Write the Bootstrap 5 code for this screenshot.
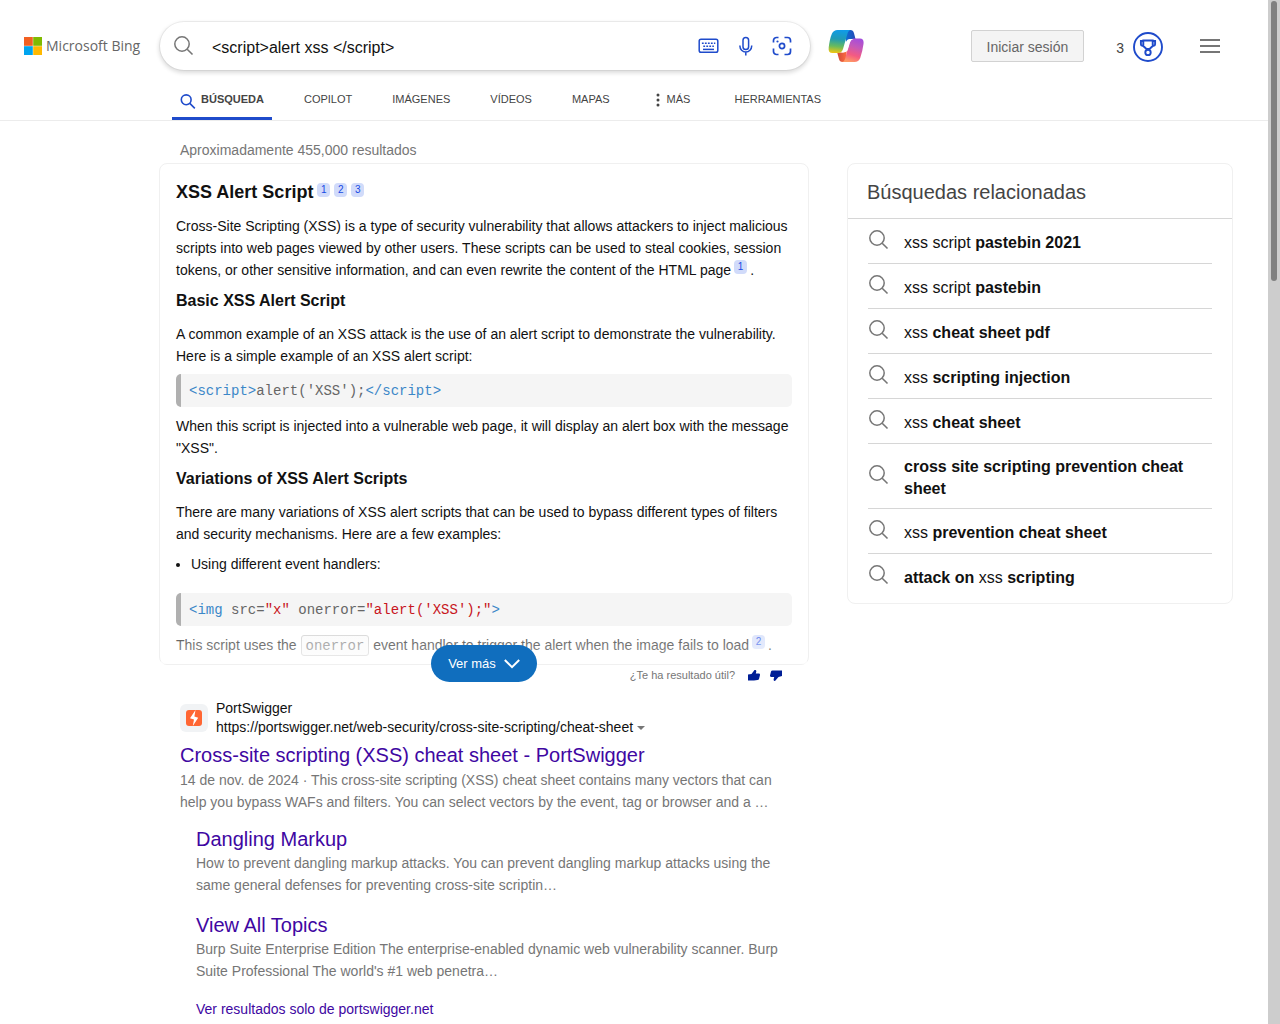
<!DOCTYPE html>
<html lang="es">
<head>
<meta charset="utf-8">
<meta name="viewport" content="width=device-width, initial-scale=1">
<title>&lt;script&gt;alert xss &lt;/script&gt; - Buscar</title>
<link href="https://cdn.jsdelivr.net/npm/bootstrap@5.3.0/dist/css/bootstrap.min.css" rel="stylesheet">
<style>
body{font:14px/22px "Liberation Sans",Arial,sans-serif;color:#111;background:#fff;overflow:hidden}
a{text-decoration:none}
svg{display:block;flex:none}
.page-shell{height:100vh;overflow:hidden}
.scroll-track{flex:0 0 12px;background:#cdcdcd}
.scroll-thumb{width:6px;height:280px;margin:1px auto 0 3px;border-radius:3px;background:#808080}
.site-head{border-bottom:1px solid #ececec}
.head-row{padding:22px 48px 0 24px}
.brand-link{flex:0 0 136px;height:48px}
.brand-name{font:500 14px/20px "Open Sans","Noto Sans",sans-serif;color:#666;white-space:nowrap}
.search-box{flex:0 1 650px;height:48px;padding:0 17px 0 13px;border-radius:24px;box-shadow:0 0 0 1px #0000000d,0 2px 4px 1px #00000024;min-width:0}
.search-input{font-size:16px;color:#111;border:0;outline:0;background:none;min-width:0;margin-left:15px;padding:3px 2px 0}
.icon-btn{border:0;background:none;padding:0}
.lens-grey{color:#767676}
.copilot-link{margin-left:18px}
.menu-btn{margin-left:36px}
.signin-btn{height:32px;padding:2px 15px 0;border:1px solid #d2d2d2;border-radius:2px;background:#f4f4f4;color:#666;white-space:nowrap}
.points{color:#444;margin-left:32px;padding-top:3px}
.tab-row{padding:8px 0 0 172px;height:50px}
.tab-link{font-size:11px;line-height:18px;color:#444;padding:12px 8px 0;margin-right:24px;height:42px;white-space:nowrap}
.tab-link.current{font-weight:700;border-bottom:3px solid #1f4bcb;gap:5px}
.tab-more{margin-right:28px}
.layout{padding:18px 35px 0 159px;gap:38px}
.results-col{flex:0 1 650px;min-width:0}
.side-col{flex:0 1 386px;min-width:0;padding-top:24px}
.count-line{padding-left:21px;color:#767676;margin-bottom:2px}
.answer-card{position:relative;border:1px solid #f0f0f0;border-radius:8px;padding:16px 16px 8px}
.answer-card p{margin:0}
.answer-card h2{font-size:18px;line-height:24px;font-weight:700;margin:0 0 11px}
.answer-card h3{font-size:16px;line-height:20px;font-weight:700;margin:10px 0 12px}
.cite{display:inline-block;font-size:10px;line-height:14px;width:13px;height:14px;text-align:center;border-radius:4px;background:#d1dbfa;color:#174ae4;font-weight:400;vertical-align:5px;margin-left:4px}
p .cite{margin:-6px 3px 0}
.snippet-code{font:14px/18px "Liberation Mono",monospace;color:#666;background:#f5f5f5;border-left:5px solid #b0b0b0;border-radius:5px;padding:8px 8px 7px;margin:7px 0 8px;overflow:hidden}
.tok-tag{color:#3b87c8}.tok-str{color:#c8161d}
.bullets{margin:8px 0 18px;padding-left:15px}
.inline-code{font:14px/20px "Liberation Mono",monospace;color:#777;border:1px solid #ccc;border-radius:3px;background:#fafafa;padding:2px 4px 1px}
.fade-out{position:absolute;left:1px;right:1px;bottom:0;height:38px;background:linear-gradient(#ffffff33,#ffffffa0)}
.more-btn{position:absolute;left:271px;bottom:-18px;height:37px;width:106px;border:0;border-radius:19px;background:#106ebe;color:#fff;font-size:13px}
.feedback{font-size:11px;line-height:20px;color:#767676;padding-right:27px;gap:10px;margin-bottom:2px}
.feedback span{margin-right:3px}
.site-icon{width:28px;height:28px;border-radius:6px;background:#f1f3f5}
.result-block{padding:12px 21px 0}
.site-line{line-height:19px;color:#111}
.result-title{font-size:20px;line-height:28px;font-weight:400;margin:0}
.result-block a.visited{color:#4007a2}
.result-text{color:#767676;margin:0}
.sub-results{padding-left:16px}
.sub-item{margin-top:13px}
.sub-item .result-title{line-height:26px}
.sub-item + .sub-item{margin-top:16px}
.related-card{border:1px solid #f0f0f0;border-radius:8px;padding-bottom:4px}
.related-card h2{font-size:20px;line-height:24px;color:#444;margin:0;padding:16px 19px 14px;border-bottom:1px solid #d6d6d6;font-weight:400}
.related-list{margin:0 20px;padding:0}
.related-list a{display:flex;align-items:center;gap:14px;min-height:45px;padding:12px 0 8px;font-size:16px;line-height:22px;color:#111;border-bottom:1px solid #d6d6d6}
.related-list li:last-child a{border-bottom-color:transparent}
.related-list svg{margin:-3px 0 3px;color:#767676}
</style>
<script src="https://cdn.jsdelivr.net/npm/bootstrap@5.3.0/dist/js/bootstrap.bundle.min.js"></script>
</head>
<body>
<svg width="0" height="0" class="position-absolute" aria-hidden="true">
<symbol id="lens" viewBox="0 0 22 22"><circle cx="9" cy="9" r="7.200" fill="none" stroke="currentColor" stroke-width="1.500"/><path d="M14.200 14.200 19.500 19.500" stroke="currentColor" stroke-width="1.600" fill="none"/></symbol>
</svg>
<div class="page-shell d-flex">
<div class="flex-grow-1 overflow-hidden">
<header class="site-head">
  <div class="head-row d-flex align-items-center">
    <a href="#" class="brand-link d-flex align-items-center">
      <svg width="18" height="18" viewBox="0 0 18 18"><path fill="#f26022" d="M0 0h9v9H0z"/><path fill="#7fba00" d="M9 0h9v9H9z"/><path fill="#00a4ef" d="M0 9h9v9H0z"/><path fill="#ffb900" d="M9 9h9v9H9z"/><path stroke="#fff" stroke-opacity=".4" d="M9 0v18M0 9h18"/></svg>
      <span class="brand-name ms-1">Microsoft Bing</span>
    </a>
    <form class="search-box d-flex align-items-center" onsubmit="return false">
      <button class="icon-btn lens-grey" type="submit" aria-label="Buscar"><svg width="22" height="22"><use href="#lens"/></svg></button>
      <input class="search-input flex-grow-1" type="text" aria-label="Consulta" value="&lt;script&gt;alert xss &lt;/script&gt;">
      <div class="d-flex align-items-center">
        <button class="icon-btn" type="button" aria-label="Teclado"><svg width="22" height="22" viewBox="0 0 22 22" fill="none" stroke="#1f4bcb" stroke-width="1.500"><rect x="2.200" y="4.200" width="18.600" height="13" rx="1.800"/><path stroke-dasharray="1.800 1.200" d="M4.900 8.200h13.400M6.300 11.200h10.600"/><path d="M6 14.400h11"/></svg></button>
        <button class="icon-btn ms-3" type="button" aria-label="Voz"><svg width="20" height="22" viewBox="0 0 20 22" fill="none" stroke="#1f4bcb" stroke-width="1.500"><rect x="8" y="2.500" width="5.600" height="12" rx="2.800"/><path d="M4.900 10.500v.6a5.900 5.900 0 0 0 11.800 0v-.6M10.800 17v3.500"/></svg></button>
        <button class="icon-btn ms-3" type="button" aria-label="Imagen"><svg width="22" height="22" viewBox="0 0 22 22" fill="none" stroke="#1f4bcb" stroke-width="1.700"><path d="M2.500 7.500v-2a3 3 0 0 1 3-3h2M13.500 2.500h3a3 3 0 0 1 3 3v2M19.500 13.500v3a3 3 0 0 1-3 3h-3M7.500 19.500h-2a3 3 0 0 1-3-3v-3"/><circle cx="11" cy="11" r="2.600"/><circle cx="6.500" cy="6.500" r="1.100" fill="#1f4bcb" stroke="none"/></svg></button>
      </div>
    </form>
    <a href="#" aria-label="Copilot" class="copilot-link"><svg width="36" height="36" viewBox="0 0 36 36">
      <defs>
      <linearGradient id="ga" x1=".5" y1="0" x2=".4" y2="1"><stop offset="0" stop-color="#109be8"/><stop offset=".4" stop-color="#209bb4"/><stop offset=".72" stop-color="#69bb5d"/><stop offset="1" stop-color="#edc514"/></linearGradient>
      <linearGradient id="gb" x1=".7" y1="0" x2=".4" y2="1"><stop offset="0" stop-color="#a54ddb"/><stop offset=".35" stop-color="#c559b8"/><stop offset=".7" stop-color="#f45a82"/><stop offset="1" stop-color="#ff9a65"/></linearGradient>
      <linearGradient id="gc"><stop offset="0" stop-color="#0b71d8"/><stop offset="1" stop-color="#2549b4"/></linearGradient>
      <linearGradient id="gd"><stop offset="0" stop-color="#cf4b3a"/><stop offset="1" stop-color="#ff6c40"/></linearGradient></defs>
      <path fill="url(#gc)" d="M17 2h5.500q2.600 0 3.500 3.200l1.500 5.800H22q-3 0-4 3z"/>
      <path fill="url(#gd)" d="M18 34h-3.500q-2.800 0-3.600-3.200L9.200 24.500H14q3.500 0 4.800-3z"/>
      <path fill="url(#ga)" d="M9.500 2H23q-2.500 0-3.500 3.500L15 21q-1.200 4-5 4H4.500Q0 25 .7 19.500C1.200 15 2.300 9 4 5.500Q5.700 2 9.500 2z"/>
      <path fill="url(#gb)" d="M26 10.500h6q4.200 0 3.500 5.500-.8 6.500-3.300 14Q30.700 34 26.500 34H13.500q2.600 0 3.700-3.500L21.500 14.500q1-4 4.500-4z"/>
      <path fill="#fff" d="M23 11Q19 11.500 18 15l-2 6.500q-1 2.500-3 3h2q4 0 5-3.500l2-6.500q.8-3 3.500-3.500z"/>
    </svg></a>
    <button class="signin-btn ms-auto" type="button">Iniciar sesión</button>
    <span class="points">3</span>
    <a href="#" aria-label="Rewards" class="ms-2"><svg width="32" height="32" viewBox="0 0 32 32" fill="none" stroke="#1f4bcb" stroke-width="1.900"><circle cx="16" cy="17" r="14"/><path d="M11.300 10.500h9.400v5.500l-3.200 3h-3l-3.200-3zM11.300 11H8.900v3.300q0 1.400 1.400 1.400h1M20.700 11h2.400v3.300q0 1.400-1.400 1.400h-1"/><circle cx="16" cy="22.400" r="2.700"/></svg></a>
    <button class="icon-btn menu-btn" type="button" aria-label="Menú"><svg width="20" height="20" viewBox="0 0 20 20" stroke="#767676" stroke-width="2"><path d="M0 4h20M0 10h20M0 16h20"/></svg></button>
  </div>
  <nav class="tab-row d-flex">
    <a class="tab-link current d-flex" href="#"><svg width="16" height="16" viewBox="0 0 16 16" fill="none" stroke="#1f4bcb" stroke-width="1.600" class="mt-1"><circle cx="6.200" cy="5.800" r="4.900"/><path d="m9.800 9.400 5 5"/></svg><span>BÚSQUEDA</span></a>
    <a class="tab-link" href="#">COPILOT</a>
    <a class="tab-link" href="#">IMÁGENES</a>
    <a class="tab-link" href="#">VÍDEOS</a>
    <a class="tab-link" href="#">MAPAS</a>
    <a class="tab-link tab-more d-flex" href="#"><svg width="17" height="18" fill="#444"><circle cx="8" cy="5" r="1.500"/><circle cx="8" cy="10" r="1.500"/><circle cx="8" cy="15" r="1.500"/></svg>MÁS</a>
    <a class="tab-link" href="#">HERRAMIENTAS</a>
  </nav>
</header>
<div class="layout d-flex">
  <main class="results-col">
    <div class="count-line">Aproximadamente 455,000 resultados</div>
    <section class="answer-card">
      <h2>XSS Alert Script<a href="#" class="cite">1</a><a href="#" class="cite">2</a><a href="#" class="cite">3</a></h2>
      <p>Cross-Site Scripting (XSS) is a type of security vulnerability that allows attackers to inject malicious scripts into web pages viewed by other users. These scripts can be used to steal cookies, session tokens, or other sensitive information, and can even rewrite the content of the HTML page<a href="#" class="cite">1</a>.</p>
      <h3>Basic XSS Alert Script</h3>
      <p>A common example of an XSS attack is the use of an alert script to demonstrate the vulnerability. Here is a simple example of an XSS alert script:</p>
      <pre class="snippet-code"><span class="tok-tag">&lt;script&gt;</span>alert('XSS');<span class="tok-tag">&lt;/script&gt;</span></pre>
      <p>When this script is injected into a vulnerable web page, it will display an alert box with the message "XSS".</p>
      <h3>Variations of XSS Alert Scripts</h3>
      <p>There are many variations of XSS alert scripts that can be used to bypass different types of filters and security mechanisms. Here are a few examples:</p>
      <ul class="bullets"><li>Using different event handlers:</li></ul>
      <pre class="snippet-code"><span class="tok-tag">&lt;img</span> src=<span class="tok-str">"x"</span> onerror=<span class="tok-str">"alert('XSS');"</span><span class="tok-tag">&gt;</span></pre>
      <p>This script uses the <span class="inline-code">onerror</span> event handler to trigger the alert when the image fails to load<a href="#" class="cite">2</a>.</p>
      <div class="fade-out"></div>
      <button class="more-btn d-flex align-items-center justify-content-center" type="button">Ver más<svg class="ms-2" width="16" height="10" viewBox="0 0 16 10" fill="none" stroke="#fff" stroke-width="2"><path d="m.8 1 7.200 7.200L15.200 1"/></svg></button>
    </section>
    <div class="feedback d-flex justify-content-end align-items-center">
      <span>¿Te ha resultado útil?</span>
      <button class="icon-btn" type="button" aria-label="Sí"><svg width="12" height="12" viewBox="0 0 12 12" fill="#001e96"><path d="M0 5.500 3.500 5 6.500 1Q8.500.5 8.300 2.500L7.800 4.500H11q1.200.3 1 1.500l-1 4q-.3 1-1.500 1L6 11.500H0z"/></svg></button>
      <button class="icon-btn" type="button" aria-label="No"><svg width="12" height="12" viewBox="0 0 12 12" fill="#001e96"><path d="M12 7 8.500 8 5 12Q3.200 12 3.700 10L4.200 8H1Q-.2 7.700 0 6.500l1-4Q1.300 1.500 2.500 1.500L6 1.500H12z"/></svg></button>
    </div>
    <article class="result-block">
      <div class="d-flex align-items-center">
        <div class="site-icon d-flex align-items-center justify-content-center me-2"><svg width="16" height="16" viewBox="0 0 16 16"><rect width="16" height="16" rx="3" fill="#ff6633"/><path fill="#fff" d="M9.500 0 4 8.200l4 1.300L6.800 16 12.200 7.800 8.400 6.500z"/></svg></div>
        <div class="site-line"><div>PortSwigger</div><div class="d-flex align-items-center">https://portswigger.net/web-security/cross-site-scripting/cheat-sheet<svg class="ms-1" width="8" height="4"><path fill="#767676" d="M0 0h8L4 4z"/></svg></div></div>
      </div>
      <h2 class="result-title mt-1"><a class="visited" href="#">Cross-site scripting (XSS) cheat sheet - PortSwigger</a></h2>
      <p class="result-text">14 de nov. de 2024 · This cross-site scripting (XSS) cheat sheet contains many vectors that can help you bypass WAFs and filters. You can select vectors by the event, tag or browser and a …</p>
      <div class="sub-results">
        <div class="sub-item"><h3 class="result-title"><a class="visited" href="#">Dangling Markup</a></h3><p class="result-text">How to prevent dangling markup attacks. You can prevent dangling markup attacks using the same general defenses for preventing cross-site scriptin…</p></div>
        <div class="sub-item"><h3 class="result-title"><a class="visited" href="#">View All Topics</a></h3><p class="result-text">Burp Suite Enterprise Edition The enterprise-enabled dynamic web vulnerability scanner. Burp Suite Professional The world's #1 web penetra…</p></div>
        <div class="mt-3"><a class="visited" href="#">Ver resultados solo de portswigger.net</a></div>
      </div>
    </article>
  </main>
  <aside class="side-col">
    <section class="related-card">
      <h2>Búsquedas relacionadas</h2>
      <ul class="related-list list-unstyled">
        <li><a href="#"><svg width="22" height="22"><use href="#lens"/></svg><span>xss script <strong>pastebin 2021</strong></span></a></li>
        <li><a href="#"><svg width="22" height="22"><use href="#lens"/></svg><span>xss script <strong>pastebin</strong></span></a></li>
        <li><a href="#"><svg width="22" height="22"><use href="#lens"/></svg><span>xss <strong>cheat sheet pdf</strong></span></a></li>
        <li><a href="#"><svg width="22" height="22"><use href="#lens"/></svg><span>xss <strong>scripting injection</strong></span></a></li>
        <li><a href="#"><svg width="22" height="22"><use href="#lens"/></svg><span>xss <strong>cheat sheet</strong></span></a></li>
        <li><a href="#"><svg width="22" height="22"><use href="#lens"/></svg><span><strong>cross site scripting prevention cheat sheet</strong></span></a></li>
        <li><a href="#"><svg width="22" height="22"><use href="#lens"/></svg><span>xss <strong>prevention cheat sheet</strong></span></a></li>
        <li><a href="#"><svg width="22" height="22"><use href="#lens"/></svg><span><strong>attack on</strong> xss <strong>scripting</strong></span></a></li>
      </ul>
    </section>
  </aside>
</div>
</div>
<div class="scroll-track" aria-hidden="true"><div class="scroll-thumb"></div></div>
</div>
</body>
</html>
